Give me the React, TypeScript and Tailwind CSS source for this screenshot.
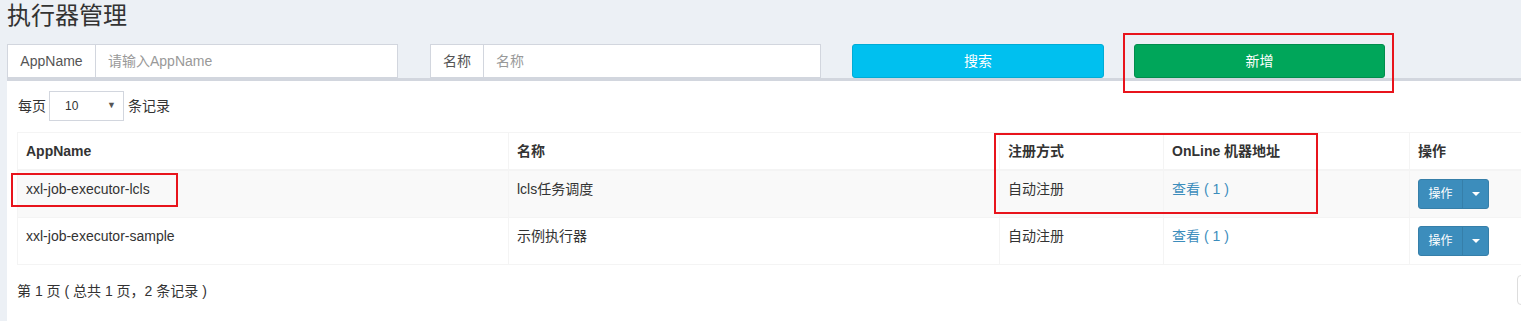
import { ChevronDown } from "lucide-react";

interface Executor {
  appName: string;
  title: string;
  addressType: string;
  onlineCount: number;
}

const executors: Executor[] = [
  { appName: "xxl-job-executor-lcls", title: "lcls任务调度", addressType: "自动注册", onlineCount: 1 },
  { appName: "xxl-job-executor-sample", title: "示例执行器", addressType: "自动注册", onlineCount: 1 },
];

const font = "font-['Liberation_Sans','Noto_Sans_CJK_SC',sans-serif]";

function InputGroup({ label, placeholder, labelWidth }: { label: string; placeholder: string; labelWidth: string }) {
  return (
    <div className="flex h-[34px] w-[391px] border border-[#d2d6de] bg-white text-[14px]">
      <span className={`${labelWidth} flex items-center justify-center border-r border-[#d2d6de] text-[#555]`}>
        {label}
      </span>
      <input
        className="flex-1 px-3 text-[#555] outline-none placeholder:text-[#999]"
        placeholder={placeholder}
      />
    </div>
  );
}

function ActionButton() {
  return (
    <div className="flex h-[30px] w-[71px] overflow-hidden rounded-[3px] border border-[#367fa9] bg-[#3c8dbc] text-[12px] text-white">
      <span className="flex w-[44px] items-center justify-center border-r border-[#367fa9]">操作</span>
      <span className="flex flex-1 items-center justify-center">
        <span className="h-0 w-0 border-x-[4px] border-t-[4px] border-x-transparent border-t-white" />
      </span>
    </div>
  );
}

export default function App() {
  return (
    <div className={`relative h-[321px] w-[1521px] overflow-hidden bg-[#ecf0f5] text-[#333] ${font}`}>
      {/* Header */}
      <h1 className="pl-[7px] pt-[2px] text-[24px] leading-[28px] text-[#333]">执行器管理</h1>

      {/* Filters */}
      <div className="mt-[14px] flex items-start pl-[7px]">
        <InputGroup label="AppName" placeholder="请输入AppName" labelWidth="w-[88px]" />
        <div className="ml-[32px]">
          <InputGroup label="名称" placeholder="名称" labelWidth="w-[53px]" />
        </div>
        <button className="ml-[31px] h-[34px] w-[252px] rounded-[3px] border border-[#00acd6] bg-[#00c0ef] text-[14px] text-white">
          搜索
        </button>
        <button className="ml-[30px] h-[34px] w-[251px] rounded-[3px] border border-[#008d4c] bg-[#00a65a] text-[14px] text-white">
          新增
        </button>
      </div>

      {/* Box */}
      <div className="ml-[7px] w-[1600px] border-t-[3px] border-[#d2d6de] bg-white pb-6 pl-[10px]">
        <div className="flex items-center pt-[10px] text-[14px]">
          <span className="ml-[1px]">每页</span>
          <div className="ml-[3px] flex h-[30px] w-[75px] items-center justify-between border border-[#d2d6de] pl-[15px] pr-[7px] text-[12px]">
            <span>10</span>
            <span className="text-[9px] text-[#555]">▼</span>
          </div>
          <span className="ml-[4px]">条记录</span>
        </div>

        <table className="mt-[11px] w-[1560px] border-collapse text-left text-[14px] leading-[20px]">
          <thead>
            <tr>
              <th className="w-[491px] border border-b-2 border-[#f4f4f4] p-2 pl-[8px]">AppName</th>
              <th className="w-[491px] border border-b-2 border-[#f4f4f4] p-2">名称</th>
              <th className="w-[164px] border border-b-2 border-[#f4f4f4] p-2">注册方式</th>
              <th className="w-[246px] border border-b-2 border-[#f4f4f4] p-2">OnLine 机器地址</th>
              <th className="border border-b-2 border-[#f4f4f4] p-2">操作</th>
            </tr>
          </thead>
          <tbody>
            {executors.map((e, i) => (
              <tr key={e.appName} className={i % 2 === 0 ? "bg-[#f9f9f9]" : "bg-white"}>
                <td className="border border-[#f4f4f4] p-2 align-top">{e.appName}</td>
                <td className="border border-[#f4f4f4] p-2 align-top">{e.title}</td>
                <td className="border border-[#f4f4f4] p-2 align-top">{e.addressType}</td>
                <td className="border border-[#f4f4f4] p-2 align-top text-[#3c8dbc]">
                  查看 ( {e.onlineCount} )
                </td>
                <td className="border border-[#f4f4f4] p-2 align-top">
                  <ActionButton />
                </td>
              </tr>
            ))}
          </tbody>
        </table>

        <div className="mt-[10px] flex items-start text-[14px]">
          <div className="w-[1500px] pt-[6px] leading-[20px]">第 1 页 ( 总共 1 页，2 条记录 )</div>
          <div className="h-[30px] w-[40px] rounded-[4px] border border-[#ddd]" />
        </div>
      </div>

      {/* Annotation boxes */}
      <div className="absolute left-[1123px] top-[33px] h-[60px] w-[271px] border-2 border-[#e8141c]" />
      <div className="absolute left-[11px] top-[173px] h-[34px] w-[167px] border-2 border-[#e8141c]" />
      <div className="absolute left-[994px] top-[133px] h-[81px] w-[324px] border-2 border-[#e8141c]" />
    </div>
  );
}
